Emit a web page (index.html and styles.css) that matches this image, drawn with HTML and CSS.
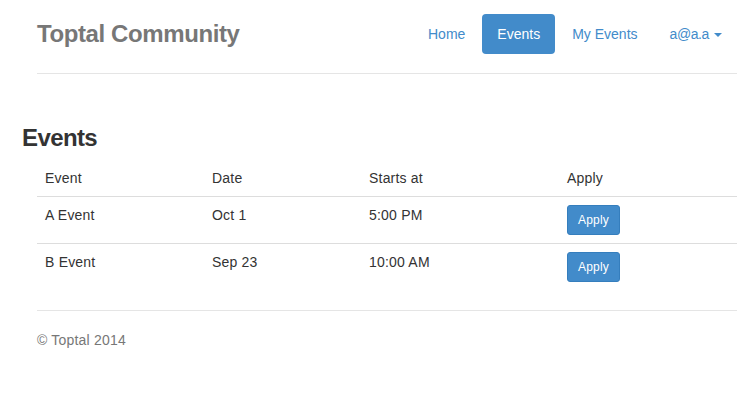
FILE: index.html
```html
<!DOCTYPE html>
<html lang="en">
<head>
<meta charset="utf-8">
<title>Toptal Community</title>
<link rel="stylesheet" href="styles.css">
</head>
<body>
<div class="page">
  <header class="header">
    <h3 class="brand">Toptal Community</h3>
    <ul class="nav">
      <li><a href="#" class="pill">Home</a></li>
      <li><a href="#" class="pill active">Events</a></li>
      <li><a href="#" class="pill">My Events</a></li>
      <li><a href="#" class="pill user">a@a.a<span class="caret"></span></a></li>
    </ul>
  </header>

  <h2 class="title">Events</h2>

  <table class="events">
    <colgroup>
      <col class="c1"><col class="c2"><col class="c3"><col class="c4">
    </colgroup>
    <thead>
      <tr><th>Event</th><th>Date</th><th>Starts at</th><th>Apply</th></tr>
    </thead>
    <tbody>
      <tr><td>A Event</td><td>Oct 1</td><td>5:00 PM</td><td><button class="btn">Apply</button></td></tr>
      <tr><td>B Event</td><td>Sep 23</td><td>10:00 AM</td><td><button class="btn">Apply</button></td></tr>
    </tbody>
  </table>

  <footer class="footer">© Toptal 2014</footer>
</div>
</body>
</html>
```

FILE: styles.css
```css
html, body {
  margin: 0;
  padding: 0;
  background: #fff;
}
body {
  font-family: "Liberation Sans", Arial, sans-serif;
  font-size: 14px;
  line-height: 20px;
  letter-spacing: 0.2px;
  color: #333;
  padding-top: 14px;
}
.page {
  padding: 0 7px 0 37px;
}
.header {
  display: flex;
  justify-content: space-between;
  align-items: flex-start;
  padding-bottom: 19px;
  border-bottom: 1px solid #e5e5e5;
}
.brand {
  margin: 0;
  font-size: 24px;
  line-height: 40px;
  font-weight: bold;
  color: #777;
  letter-spacing: -0.4px;
}
.nav {
  display: flex;
  gap: 2px;
  list-style: none;
  margin: 0;
  padding: 0;
  letter-spacing: 0;
}
.pill {
  display: flex;
  align-items: center;
  padding: 10px 15px;
  line-height: 20px;
  color: #428bca;
  text-decoration: none;
  border-radius: 4px;
}
.pill.user {
  letter-spacing: -0.4px;
}
.pill.active {
  background: #428bca;
  color: #fff;
}
.caret {
  display: block;
  width: 0;
  height: 0;
  margin-left: 5px;
  margin-top: 1px;
  border-top: 4px solid #428bca;
  border-left: 4px solid transparent;
  border-right: 4px solid transparent;
}
.title {
  margin: 50px 0 8px -15px;
  font-size: 24px;
  line-height: 28px;
  font-weight: bold;
  color: #333;
  letter-spacing: -0.6px;
}
.events {
  width: 100%;
  border-collapse: collapse;
  margin-bottom: 20px;
}
.c1 { width: 167px; }
.c2 { width: 157px; }
.c3 { width: 198px; }
.events th,
.events td {
  padding: 8px;
  text-align: left;
  vertical-align: top;
  font-weight: normal;
  line-height: 20px;
}
.events th {
  border-bottom: 1px solid #ddd;
}
.events tbody tr + tr td {
  border-top: 1px solid #ddd;
}
.btn {
  font-family: "Liberation Sans", Arial, sans-serif;
  font-size: 12px;
  line-height: 18px;
  letter-spacing: 0.2px;
  padding: 5px 10px;
  color: #fff;
  background: #428bca;
  border: 1px solid #357ebd;
  border-radius: 3px;
  cursor: pointer;
  display: block;
}
.footer {
  border-top: 1px solid #e5e5e5;
  padding-top: 19px;
  color: #777;
}
```
